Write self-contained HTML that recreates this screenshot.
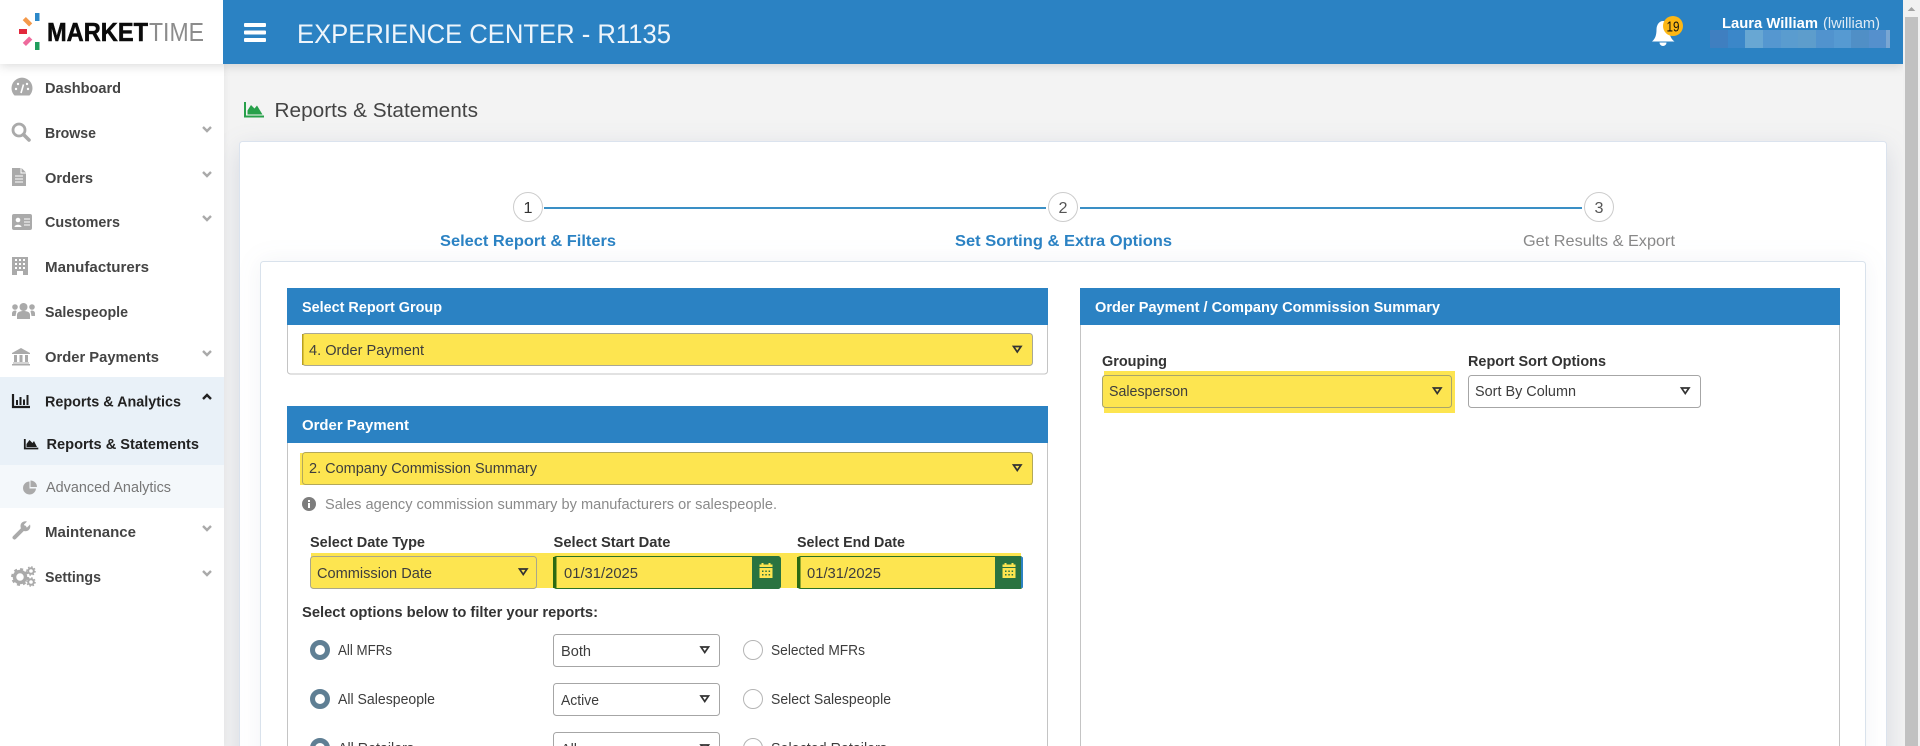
<!DOCTYPE html>
<html lang="en">
<head>
<meta charset="utf-8">
<title>Reports &amp; Statements</title>
<style>
html,body{margin:0;padding:0;width:1920px;height:746px;overflow:hidden;background:#f3f3f3}
svg{display:block}
text{font-family:"Liberation Sans",sans-serif;font-size:14.5px;fill:#333}
.nav{font-weight:700;fill:#444}
.h{font-weight:700;fill:#fff}
.lb{font-weight:700;fill:#333}
.t{fill:#3d3d3d}
.ic{fill:#aaa}
.chev{fill:none;stroke:#aaa;stroke-width:2.4}
.arr{fill:none;stroke:#333;stroke-width:1.7}
</style>
</head>
<body>
<svg xmlns="http://www.w3.org/2000/svg" width="1920" height="746" viewBox="0 0 1920 746">
<rect width="1920" height="746" fill="#f3f3f3"/>

<!-- card -->
<rect x="239.5" y="141.5" width="1647" height="640" rx="3" fill="#fff" stroke="#dbe3ee" style="filter:drop-shadow(0 8px 13px rgba(70,85,130,.16))"/>
<!-- inner panel -->
<rect x="260.5" y="261.5" width="1605" height="520" rx="3" fill="#fff" stroke="#d9e2ec" style="filter:drop-shadow(0 0 12px rgba(70,85,130,.07))"/>

<!-- sidebar -->
<rect x="0" y="64" width="224" height="682" fill="#fff" style="filter:drop-shadow(1px 0 3px rgba(0,0,0,.05))"/>
<rect x="0" y="377" width="224" height="88" fill="#e9f1f8"/>
<rect x="0" y="465" width="224" height="43" fill="#f4f8fb"/>

<!-- header -->
<rect x="0" y="0" width="1903" height="64" fill="#2b82c3" style="filter:drop-shadow(0 2px 5px rgba(0,0,0,.14))"/>
<rect x="0" y="0" width="223" height="64" fill="#fff"/>

<!-- logo -->
<rect x="35" y="13" width="4.5" height="8" fill="#2b88c9"/>
<rect x="23" y="19.5" width="9" height="4.5" fill="#f4994a" transform="rotate(45 27.5 21.7)"/>
<rect x="19" y="29" width="8" height="5" fill="#e2283c"/>
<rect x="23" y="39" width="9" height="4.5" fill="#ee6a9c" transform="rotate(-45 27.5 41.2)"/>
<rect x="35" y="42" width="4.5" height="8" fill="#1f9d5c"/>
<text x="47" y="41" textLength="101" lengthAdjust="spacingAndGlyphs" style="font-size:25.5px;font-weight:700;fill:#0b0b0b;stroke:#0b0b0b;stroke-width:.5">MARKET</text>
<text x="149" y="41" textLength="55" lengthAdjust="spacingAndGlyphs" style="font-size:25.5px;fill:#8c8c8c">TIME</text>

<!-- hamburger -->
<rect x="244" y="23" width="22" height="4" rx="1" fill="#fff"/>
<rect x="244" y="30.5" width="22" height="4" rx="1" fill="#fff"/>
<rect x="244" y="38" width="22" height="4" rx="1" fill="#fff"/>
<text x="297" y="43" textLength="374" lengthAdjust="spacingAndGlyphs" style="font-size:27px;fill:#eef5fb">EXPERIENCE CENTER - R1135</text>

<!-- bell -->
<path d="M1652 41.5c3-2.5 4.5-6 4.5-12 0-5 3-8.5 6.5-8.5s6.5 3.500 6.500 8.500c0 6 1.500 9.500 5 12z" fill="#fff"/>
<path d="M1659.500 42.500a3.500 3.500 0 0 0 7 0z" fill="#fff"/>
<circle cx="1673" cy="26" r="10" fill="#fdb714"/>
<text x="1666.500" y="31.500" textLength="13" lengthAdjust="spacingAndGlyphs" style="font-size:15px;fill:#111">19</text>

<!-- user -->
<text x="1722" y="28" textLength="96" lengthAdjust="spacingAndGlyphs" style="font-size:14.500px;font-weight:700;fill:#fff">Laura William</text>
<text x="1823" y="28" textLength="57" lengthAdjust="spacingAndGlyphs" style="font-size:14.500px;fill:#dfebf5">(lwilliam)</text>
<g>
<rect x="1710" y="30" width="18" height="18" fill="#3f7fc0"/>
<rect x="1728" y="30" width="17" height="18" fill="#3b87c9"/>
<rect x="1745" y="30" width="18" height="18" fill="#68a7d3"/>
<rect x="1763" y="30" width="18" height="18" fill="#5597d0"/>
<rect x="1781" y="30" width="17" height="18" fill="#5a9ccf"/>
<rect x="1798" y="30" width="18" height="18" fill="#5d9dcc"/>
<rect x="1816" y="30" width="18" height="18" fill="#5193ce"/>
<rect x="1834" y="30" width="17" height="18" fill="#569ad2"/>
<rect x="1851" y="30" width="18" height="18" fill="#508fc6"/>
<rect x="1869" y="30" width="17" height="18" fill="#5590cd"/>
<rect x="1886" y="30" width="4" height="18" fill="#7aa6d3"/>
</g>

<!-- scrollbar -->
<rect x="1903" y="0" width="17" height="746" fill="#f1f1f1"/>
<rect x="1905" y="17" width="13" height="729" fill="#c1c1c1"/>
<path d="M1911.500 7l3.800 4h-7.600z" fill="#a3a3a3"/>

<!-- sidebar text -->
<text class="nav" x="45" y="93" textLength="76" lengthAdjust="spacingAndGlyphs">Dashboard</text>
<text class="nav" x="45" y="138" textLength="51" lengthAdjust="spacingAndGlyphs">Browse</text>
<text class="nav" x="45" y="183" textLength="48" lengthAdjust="spacingAndGlyphs">Orders</text>
<text class="nav" x="45" y="227" textLength="75" lengthAdjust="spacingAndGlyphs">Customers</text>
<text class="nav" x="45" y="272" textLength="104" lengthAdjust="spacingAndGlyphs">Manufacturers</text>
<text class="nav" x="45" y="317" textLength="83" lengthAdjust="spacingAndGlyphs">Salespeople</text>
<text class="nav" x="45" y="362" textLength="114" lengthAdjust="spacingAndGlyphs">Order Payments</text>
<text class="nav" x="45" y="406.500" textLength="136" lengthAdjust="spacingAndGlyphs" style="fill:#222">Reports &amp; Analytics</text>
<text class="nav" x="46.500" y="449" textLength="152.500" lengthAdjust="spacingAndGlyphs" style="fill:#222">Reports &amp; Statements</text>
<text x="46" y="492" textLength="125" lengthAdjust="spacingAndGlyphs" style="fill:#777">Advanced Analytics</text>
<text class="nav" x="45" y="537" textLength="91" lengthAdjust="spacingAndGlyphs">Maintenance</text>
<text class="nav" x="45" y="582" textLength="56" lengthAdjust="spacingAndGlyphs">Settings</text>

<!-- chevrons -->
<path class="chev" d="M203 127l4 4 4-4"/>
<path class="chev" d="M203 172l4 4 4-4"/>
<path class="chev" d="M203 216l4 4 4-4"/>
<path class="chev" d="M203 351l4 4 4-4"/>
<path d="M203 399l4-4 4 4" fill="none" stroke="#222" stroke-width="2.400"/>
<path class="chev" d="M203 526l4 4 4-4"/>
<path class="chev" d="M203 571l4 4 4-4"/>

<!-- sidebar icons -->
<path class="ic" d="M14.500 95.500A10.500 10.500 0 1 1 29.500 95.500z"/>
<path d="M21 93l2.500-8.500" stroke="#fff" stroke-width="1.600"/>
<circle cx="16" cy="89" r="1.200" fill="#fff"/><circle cx="18" cy="84" r="1.200" fill="#fff"/><circle cx="28" cy="89" r="1.200" fill="#fff"/><circle cx="27" cy="84" r="1.200" fill="#fff"/>

<circle cx="19" cy="130" r="6" fill="none" stroke="#aaa" stroke-width="2.800"/>
<path d="M23.500 134.500l5.500 5.500" stroke="#aaa" stroke-width="3.600" stroke-linecap="round"/>

<path class="ic" d="M12 168h8.500v5.500h5.500V186H12z"/><path class="ic" d="M21.500 168l4.500 4.500h-4.500z"/>
<path d="M15 176h8M15 179h8M15 182h8" stroke="#fff" stroke-width="1"/>

<rect class="ic" x="12" y="214" width="20" height="16" rx="2"/>
<circle cx="18" cy="220" r="2.300" fill="#fff"/><path d="M14.500 227c0-3 7-3 7 0z" fill="#fff"/>
<path d="M24 219h6M24 222h6M24 225h6" stroke="#fff" stroke-width="1.100"/>

<path class="ic" d="M12 257h16v18h-5v-4h-6v4h-5z"/>
<g fill="#fff"><rect x="15" y="259" width="2" height="2"/><rect x="19" y="259" width="2" height="2"/><rect x="23" y="259" width="2" height="2"/><rect x="15" y="263" width="2" height="2"/><rect x="19" y="263" width="2" height="2"/><rect x="23" y="263" width="2" height="2"/><rect x="15" y="267" width="2" height="2"/><rect x="19" y="267" width="2" height="2"/><rect x="23" y="267" width="2" height="2"/></g>

<circle class="ic" cx="23.500" cy="307" r="4"/><path class="ic" d="M17 319v-4c0-3 3-4 6.500-4s6.500 1 6.500 4v4z"/>
<circle class="ic" cx="15" cy="307" r="2.800"/><path class="ic" d="M12 316v-2.500c0-2 1.500-3 3.500-3l1 .5-1 5z"/>
<circle class="ic" cx="32" cy="307" r="2.800"/><path class="ic" d="M35 316v-2.500c0-2-1.500-3-3.500-3l-1 .5 1 5z"/>

<path class="ic" d="M12 353l9-5 9 5v1H12z"/>
<path class="ic" d="M14 355h3v7h-3zM19.500 355h3v7h-3zM25 355h3v7h-3zM13 362.500h16v1H13zM12 364h18v1.500H12z"/>

<path d="M13 394v13h17" fill="none" stroke="#1d1d1d" stroke-width="2.200"/>
<path d="M16 400h2v5h-2zM19.500 397h2v8h-2zM23 399.500h2v5.500h-2zM26.500 395h2v10h-2z" fill="#1d1d1d"/>

<path d="M24.800 439v9.500h13.500" fill="none" stroke="#1d1d1d" stroke-width="1.800"/>
<path d="M26.500 447v-3l3-4 3 3 1.500-2 3 6z" fill="#1d1d1d"/>

<path class="ic" d="M30.500 480.500v6.500h6.500a6.500 6.500 0 0 0-6.500-6.500z"/>
<path class="ic" d="M29.500 481.500a6.500 6.500 0 1 0 6.500 7h-6.500z"/>

<path d="M14.500 537.500l10-10" stroke="#aaa" stroke-width="4" stroke-linecap="round"/>
<path class="ic" d="M30 524.500l-3 3-2.500-.5-.5-2.500 3-3c-3-1-6.500 1-6.500 4.500 0 3.500 3 6 6.500 5 2.500-.8 4-3.500 3-6.500z"/>

<circle cx="20" cy="577" r="5.500" fill="none" stroke="#aaa" stroke-width="3.500"/>
<circle cx="20" cy="577" r="7.800" fill="none" stroke="#aaa" stroke-width="2.200" stroke-dasharray="3 3.100"/>
<circle cx="31" cy="571" r="2.800" fill="none" stroke="#aaa" stroke-width="2"/>
<circle cx="31" cy="571" r="4.200" fill="none" stroke="#aaa" stroke-width="1.200" stroke-dasharray="1.600 1.700"/>
<circle cx="31" cy="582" r="2.800" fill="none" stroke="#aaa" stroke-width="2"/>
<circle cx="31" cy="582" r="4.200" fill="none" stroke="#aaa" stroke-width="1.200" stroke-dasharray="1.600 1.700"/>

<!-- page title -->
<path d="M245 102v14.500h19" fill="none" stroke="#27a04a" stroke-width="2"/>
<path d="M247.500 114.500v-4l3.500-5.500 3.500 3.500 2.500-3 5.500 9z" fill="#27a04a"/>
<text x="274.500" y="117" textLength="203.500" lengthAdjust="spacingAndGlyphs" style="font-size:20.500px;fill:#444">Reports &amp; Statements</text>

<!-- stepper -->
<path d="M544 208h502M1080 208h502" stroke="#3a8fc5" stroke-width="2"/>
<circle cx="528" cy="207" r="14.500" fill="#fff" stroke="#ccc"/>
<circle cx="1063" cy="207" r="14.500" fill="#fff" stroke="#ccc"/>
<circle cx="1599" cy="207" r="14.500" fill="#fff" stroke="#ccc"/>
<text x="523.500" y="213" textLength="9" lengthAdjust="spacingAndGlyphs" style="font-size:16px">1</text>
<text x="1058.500" y="213" textLength="9" lengthAdjust="spacingAndGlyphs" style="font-size:16px;fill:#555">2</text>
<text x="1594.500" y="213" textLength="9" lengthAdjust="spacingAndGlyphs" style="font-size:16px;fill:#555">3</text>
<text x="440" y="246" textLength="176" lengthAdjust="spacingAndGlyphs" style="font-size:16px;font-weight:700;fill:#2b82c3">Select Report &amp; Filters</text>
<text x="955" y="246" textLength="217" lengthAdjust="spacingAndGlyphs" style="font-size:16px;font-weight:700;fill:#2b82c3">Set Sorting &amp; Extra Options</text>
<text x="1523" y="246" textLength="152" lengthAdjust="spacingAndGlyphs" style="font-size:16px;fill:#888">Get Results &amp; Export</text>

<!-- left column: report group -->
<rect x="287.500" y="300" width="760" height="74" rx="3" fill="#fff" stroke="#c4c4c4"/>
<rect x="287" y="288" width="761" height="37" fill="#2b82c3"/>
<text class="h" x="302" y="312" textLength="140" lengthAdjust="spacingAndGlyphs">Select Report Group</text>
<rect x="302.500" y="333.500" width="730" height="32" rx="3" fill="#fde550" stroke="#a9a795"/>
<rect x="302" y="334" width="1.500" height="31" fill="#b89f20"/>
<text x="309" y="355" textLength="115" lengthAdjust="spacingAndGlyphs" class="t">4. Order Payment</text>
<path class="arr" d="M1013.500 346.500h7.500l-3.750 5.500z"/>

<!-- left column: order payment -->
<rect x="287.500" y="420" width="760" height="346" fill="#fff" stroke="#c4c4c4"/>
<rect x="287" y="406" width="761" height="37" fill="#2b82c3"/>
<text class="h" x="302" y="430" textLength="107" lengthAdjust="spacingAndGlyphs">Order Payment</text>
<rect x="300" y="453" width="732" height="32" fill="#fde550"/>
<rect x="302.500" y="452.500" width="730" height="32" rx="3" fill="#fde550" stroke="#b3a85a"/>
<text x="309" y="473" textLength="228" lengthAdjust="spacingAndGlyphs" class="t">2. Company Commission Summary</text>
<path class="arr" d="M1013.500 465h7.500l-3.750 5.500z"/>

<circle cx="309" cy="504" r="7" fill="#7d7d7d"/>
<rect x="308" y="503" width="2" height="5" fill="#fff"/><rect x="308" y="500" width="2" height="2" fill="#fff"/>
<text x="325" y="509" textLength="452" lengthAdjust="spacingAndGlyphs" style="fill:#8a8a8a">Sales agency commission summary by manufacturers or salespeople.</text>

<text class="lb" x="310" y="547" textLength="115" lengthAdjust="spacingAndGlyphs">Select Date Type</text>
<text class="lb" x="553.500" y="547" textLength="117" lengthAdjust="spacingAndGlyphs">Select Start Date</text>
<text class="lb" x="797" y="547" textLength="108" lengthAdjust="spacingAndGlyphs">Select End Date</text>

<rect x="311" y="553" width="710" height="35" fill="#fde550"/>
<rect x="310.500" y="556.500" width="226" height="32" rx="3" fill="#fde550" stroke="#aaa78a"/>
<text x="317" y="578" textLength="115" lengthAdjust="spacingAndGlyphs" class="t">Commission Date</text>
<path class="arr" d="M519.500 569h7.500l-3.750 5.500z"/>

<!-- start date -->
<rect x="553.500" y="556.500" width="227" height="32" rx="3" fill="#fde550" stroke="#2b7126"/>
<rect x="553" y="557" width="3.500" height="31" fill="#2b6a12"/>
<path d="M752 556h26a3 3 0 0 1 3 3v27a3 3 0 0 1-3 3h-26z" fill="#2a7340"/>
<text x="564" y="578" textLength="74" lengthAdjust="spacingAndGlyphs" class="t">01/31/2025</text>
<path d="M759.500 567v-2.500h2v-1.500h2v1.500h5v-1.500h2v1.500h2v2.500zM759.500 568h13v10h-13z" fill="#fde550"/>
<path d="M762 570.500h1.500v1.500H762zM765.300 570.500h1.500v1.500h-1.500zM768.600 570.500h1.500v1.500h-1.500zM762 574h1.500v1.500H762zM765.300 574h1.500v1.500h-1.500zM768.600 574h1.500v1.500h-1.500z" fill="#2a7340"/>

<!-- end date -->
<rect x="797.500" y="556.500" width="225" height="32" rx="3" fill="#fde550" stroke="#2b7126"/>
<rect x="797" y="557" width="3.500" height="31" fill="#2b6a12"/>
<path d="M995 556h25a3 3 0 0 1 3 3v27a3 3 0 0 1-3 3h-25z" fill="#2a7340"/>
<path d="M1021 557h1a1 1 0 0 1 1 1v29a1 1 0 0 1-1 1h-1z" fill="#2b82c3"/>
<text x="807" y="578" textLength="74" lengthAdjust="spacingAndGlyphs" class="t">01/31/2025</text>
<path d="M1002.500 567v-2.500h2v-1.500h2v1.500h5v-1.500h2v1.500h2v2.500zM1002.500 568h13v10h-13z" fill="#fde550"/>
<path d="M1005 570.500h1.500v1.500h-1.500zM1008.300 570.500h1.500v1.500h-1.500zM1011.600 570.500h1.500v1.500h-1.500zM1005 574h1.500v1.500h-1.500zM1008.300 574h1.500v1.500h-1.500zM1011.600 574h1.500v1.500h-1.500z" fill="#2a7340"/>

<text class="lb" x="302" y="617" textLength="296" lengthAdjust="spacingAndGlyphs">Select options below to filter your reports:</text>

<!-- radios -->
<g fill="#fff" stroke="#5f7f94" stroke-width="5">
<circle cx="320" cy="650" r="7.500"/><circle cx="320" cy="699" r="7.500"/><circle cx="320" cy="748" r="7.500"/>
</g>
<g fill="#fff" stroke="#b5b5b5" stroke-width="1">
<circle cx="753" cy="650" r="9.500"/><circle cx="753" cy="699" r="9.500"/><circle cx="753" cy="748" r="9.500"/>
</g>
<text class="t" x="338" y="655" textLength="54" lengthAdjust="spacingAndGlyphs">All MFRs</text>
<text class="t" x="338" y="704" textLength="97" lengthAdjust="spacingAndGlyphs">All Salespeople</text>
<text class="t" x="338" y="753" textLength="76" lengthAdjust="spacingAndGlyphs">All Retailers</text>
<text class="t" x="771" y="655" textLength="94" lengthAdjust="spacingAndGlyphs">Selected MFRs</text>
<text class="t" x="771" y="704" textLength="120" lengthAdjust="spacingAndGlyphs">Select Salespeople</text>
<text class="t" x="771" y="753" textLength="116" lengthAdjust="spacingAndGlyphs">Selected Retailers</text>

<g fill="#fff" stroke="#a6a6a6">
<rect x="553.500" y="634.500" width="166" height="32" rx="3"/>
<rect x="553.500" y="683.500" width="166" height="32" rx="3"/>
<rect x="553.500" y="732.500" width="166" height="32" rx="3"/>
</g>
<text class="t" x="561" y="656" textLength="30" lengthAdjust="spacingAndGlyphs">Both</text>
<text class="t" x="561" y="705" textLength="38" lengthAdjust="spacingAndGlyphs">Active</text>
<text class="t" x="561" y="754" textLength="16" lengthAdjust="spacingAndGlyphs">All</text>
<path class="arr" d="M701 647h7.500l-3.750 5.500z"/>
<path class="arr" d="M701 696h7.500l-3.750 5.500z"/>
<path class="arr" d="M701 745h7.500l-3.750 5.500z"/>

<!-- right column -->
<rect x="1080.500" y="300" width="759" height="480" fill="#fff" stroke="#c4c4c4"/>
<rect x="1080" y="288" width="760" height="37" fill="#2b82c3"/>
<text class="h" x="1095" y="312" textLength="345" lengthAdjust="spacingAndGlyphs">Order Payment / Company Commission Summary</text>
<text class="lb" x="1102" y="366" textLength="65" lengthAdjust="spacingAndGlyphs">Grouping</text>
<text class="lb" x="1468" y="366" textLength="138" lengthAdjust="spacingAndGlyphs">Report Sort Options</text>

<rect x="1104" y="371" width="351" height="42" fill="#fde550"/>
<rect x="1102.500" y="375.500" width="349" height="32" rx="3" fill="#fde550" stroke="#a9a56a"/>
<text class="t" x="1109" y="396" textLength="79" lengthAdjust="spacingAndGlyphs">Salesperson</text>
<path class="arr" d="M1433.500 388h7.500l-3.750 5.500z"/>

<rect x="1468.500" y="375.500" width="232" height="32" rx="3" fill="#fff" stroke="#a6a6a6"/>
<text class="t" x="1475" y="396" textLength="101" lengthAdjust="spacingAndGlyphs">Sort By Column</text>
<path class="arr" d="M1681.500 388h7.500l-3.750 5.500z"/>
</svg>
</body>
</html>
